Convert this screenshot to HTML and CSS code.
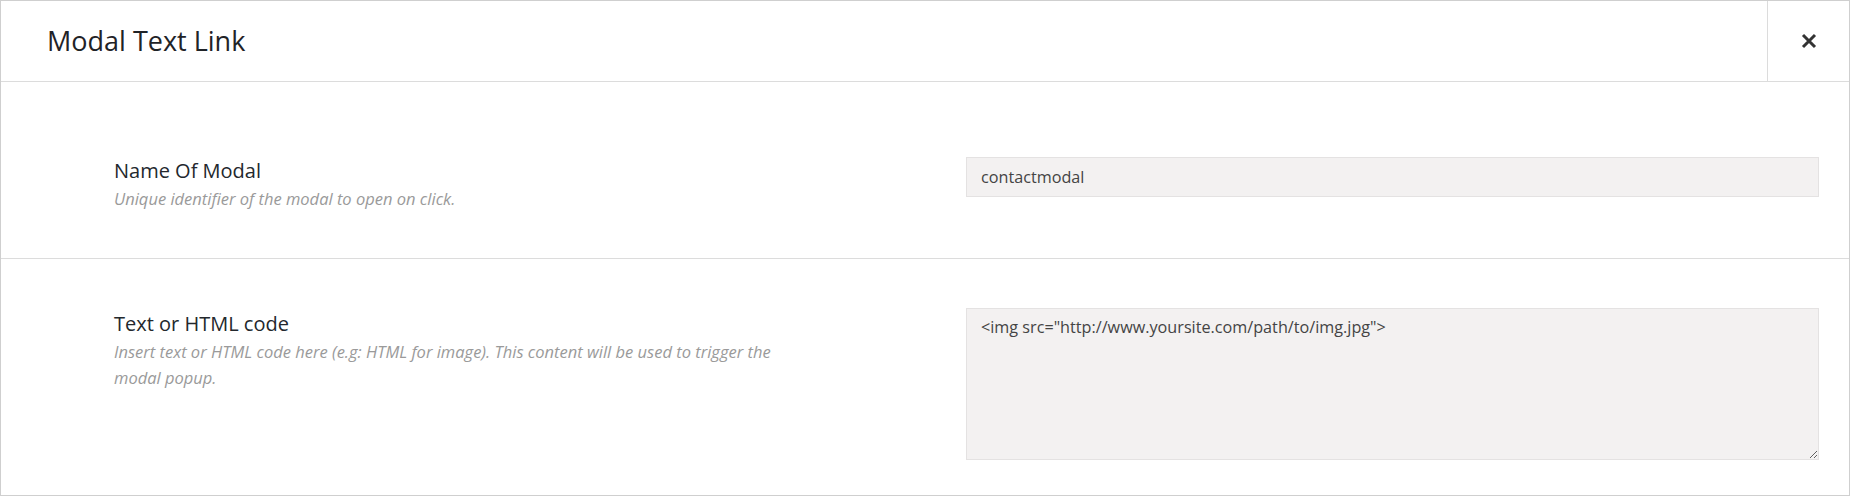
FILE: index.html
```html
<!DOCTYPE html>
<html lang="en">
<head>
<meta charset="utf-8">
<title>Modal Text Link</title>
<link rel="stylesheet" href="styles.css">
</head>
<body>
<div class="modal">
  <div class="modal-header">
    <h1 class="modal-title">Modal Text Link</h1>
    <button class="modal-close" type="button" aria-label="Close">
      <svg width="16" height="16" viewBox="0 0 16 16" aria-hidden="true">
        <path d="M2 2 L14 14 M14 2 L2 14" stroke="#333" stroke-width="3" stroke-linecap="butt" fill="none"/>
      </svg>
    </button>
  </div>
  <div class="field field-first">
    <div class="field-info">
      <div class="field-label">Name Of Modal</div>
      <div class="field-desc">Unique identifier of the modal to open on click.</div>
    </div>
    <div class="field-control">
      <input class="text-input" type="text" value="contactmodal">
    </div>
  </div>
  <div class="field field-last">
    <div class="field-info field-info-offset">
      <div class="field-label">Text or HTML code</div>
      <div class="field-desc">Insert text or HTML code here (e.g: HTML for image). This content will be used to trigger the modal popup.</div>
    </div>
    <div class="field-control">
      <textarea class="text-area">&lt;img src="http://www.yoursite.com/path/to/img.jpg"&gt;</textarea>
    </div>
  </div>
</div>
</body>
</html>
```

FILE: styles.css
```css
html, body {
  margin: 0;
  padding: 0;
  background: #ffffff;
}

body {
  font-family: "Open Sans", "Noto Sans", "Liberation Sans", sans-serif;
  color: #23282d;
}

.modal {
  box-sizing: border-box;
  width: 1850px;
  height: 496px;
  border: 1px solid #cfcfcf;
  background: #fff;
  overflow: hidden;
}

.modal-header {
  display: flex;
  height: 80px;
  border-bottom: 1px solid #dcdcdc;
}

.modal-title {
  flex: 1;
  margin: 0;
  padding-left: 46px;
  font-size: 27px;
  font-weight: 400;
  line-height: 80px;
  color: #1f2327;
}

.modal-close {
  width: 82px;
  height: 80px;
  border: 0;
  border-left: 1px solid #dcdcdc;
  background: transparent;
  padding: 0;
  display: flex;
  align-items: center;
  justify-content: center;
  cursor: pointer;
}

.field {
  display: flex;
  align-items: flex-start;
}

.field-first {
  height: 177px;
  box-sizing: border-box;
  padding-top: 75px;
  border-bottom: 1px solid #dcdcdc;
}

.field-last {
  padding-top: 49px;
}

.field-info {
  box-sizing: border-box;
  width: 965px;
  padding-left: 113px;
  padding-right: 160px;
}

.field-info-offset {
  padding-top: 2px;
}

.field-label {
  font-size: 20px;
  line-height: 28px;
  color: #23282d;
}

.field-desc {
  margin-top: 1px;
  font-size: 16.5px;
  font-style: italic;
  line-height: 26px;
  color: #9a9a9a;
}

.field-control {
  flex: 1;
  padding-right: 30px;
}

.text-input,
.text-area {
  display: block;
  box-sizing: border-box;
  width: 100%;
  margin: 0;
  font-family: "Open Sans", "Noto Sans", "Liberation Sans", sans-serif;
  font-size: 16.2px;
  color: #444;
  background: #f3f1f1;
  border: 1px solid #e4e2e2;
  border-radius: 0;
  outline: none;
}

.text-input {
  height: 40px;
  padding: 0 14px;
}

.text-area {
  height: 152px;
  padding: 6px 14px;
  line-height: 24px;
  resize: vertical;
}
```
